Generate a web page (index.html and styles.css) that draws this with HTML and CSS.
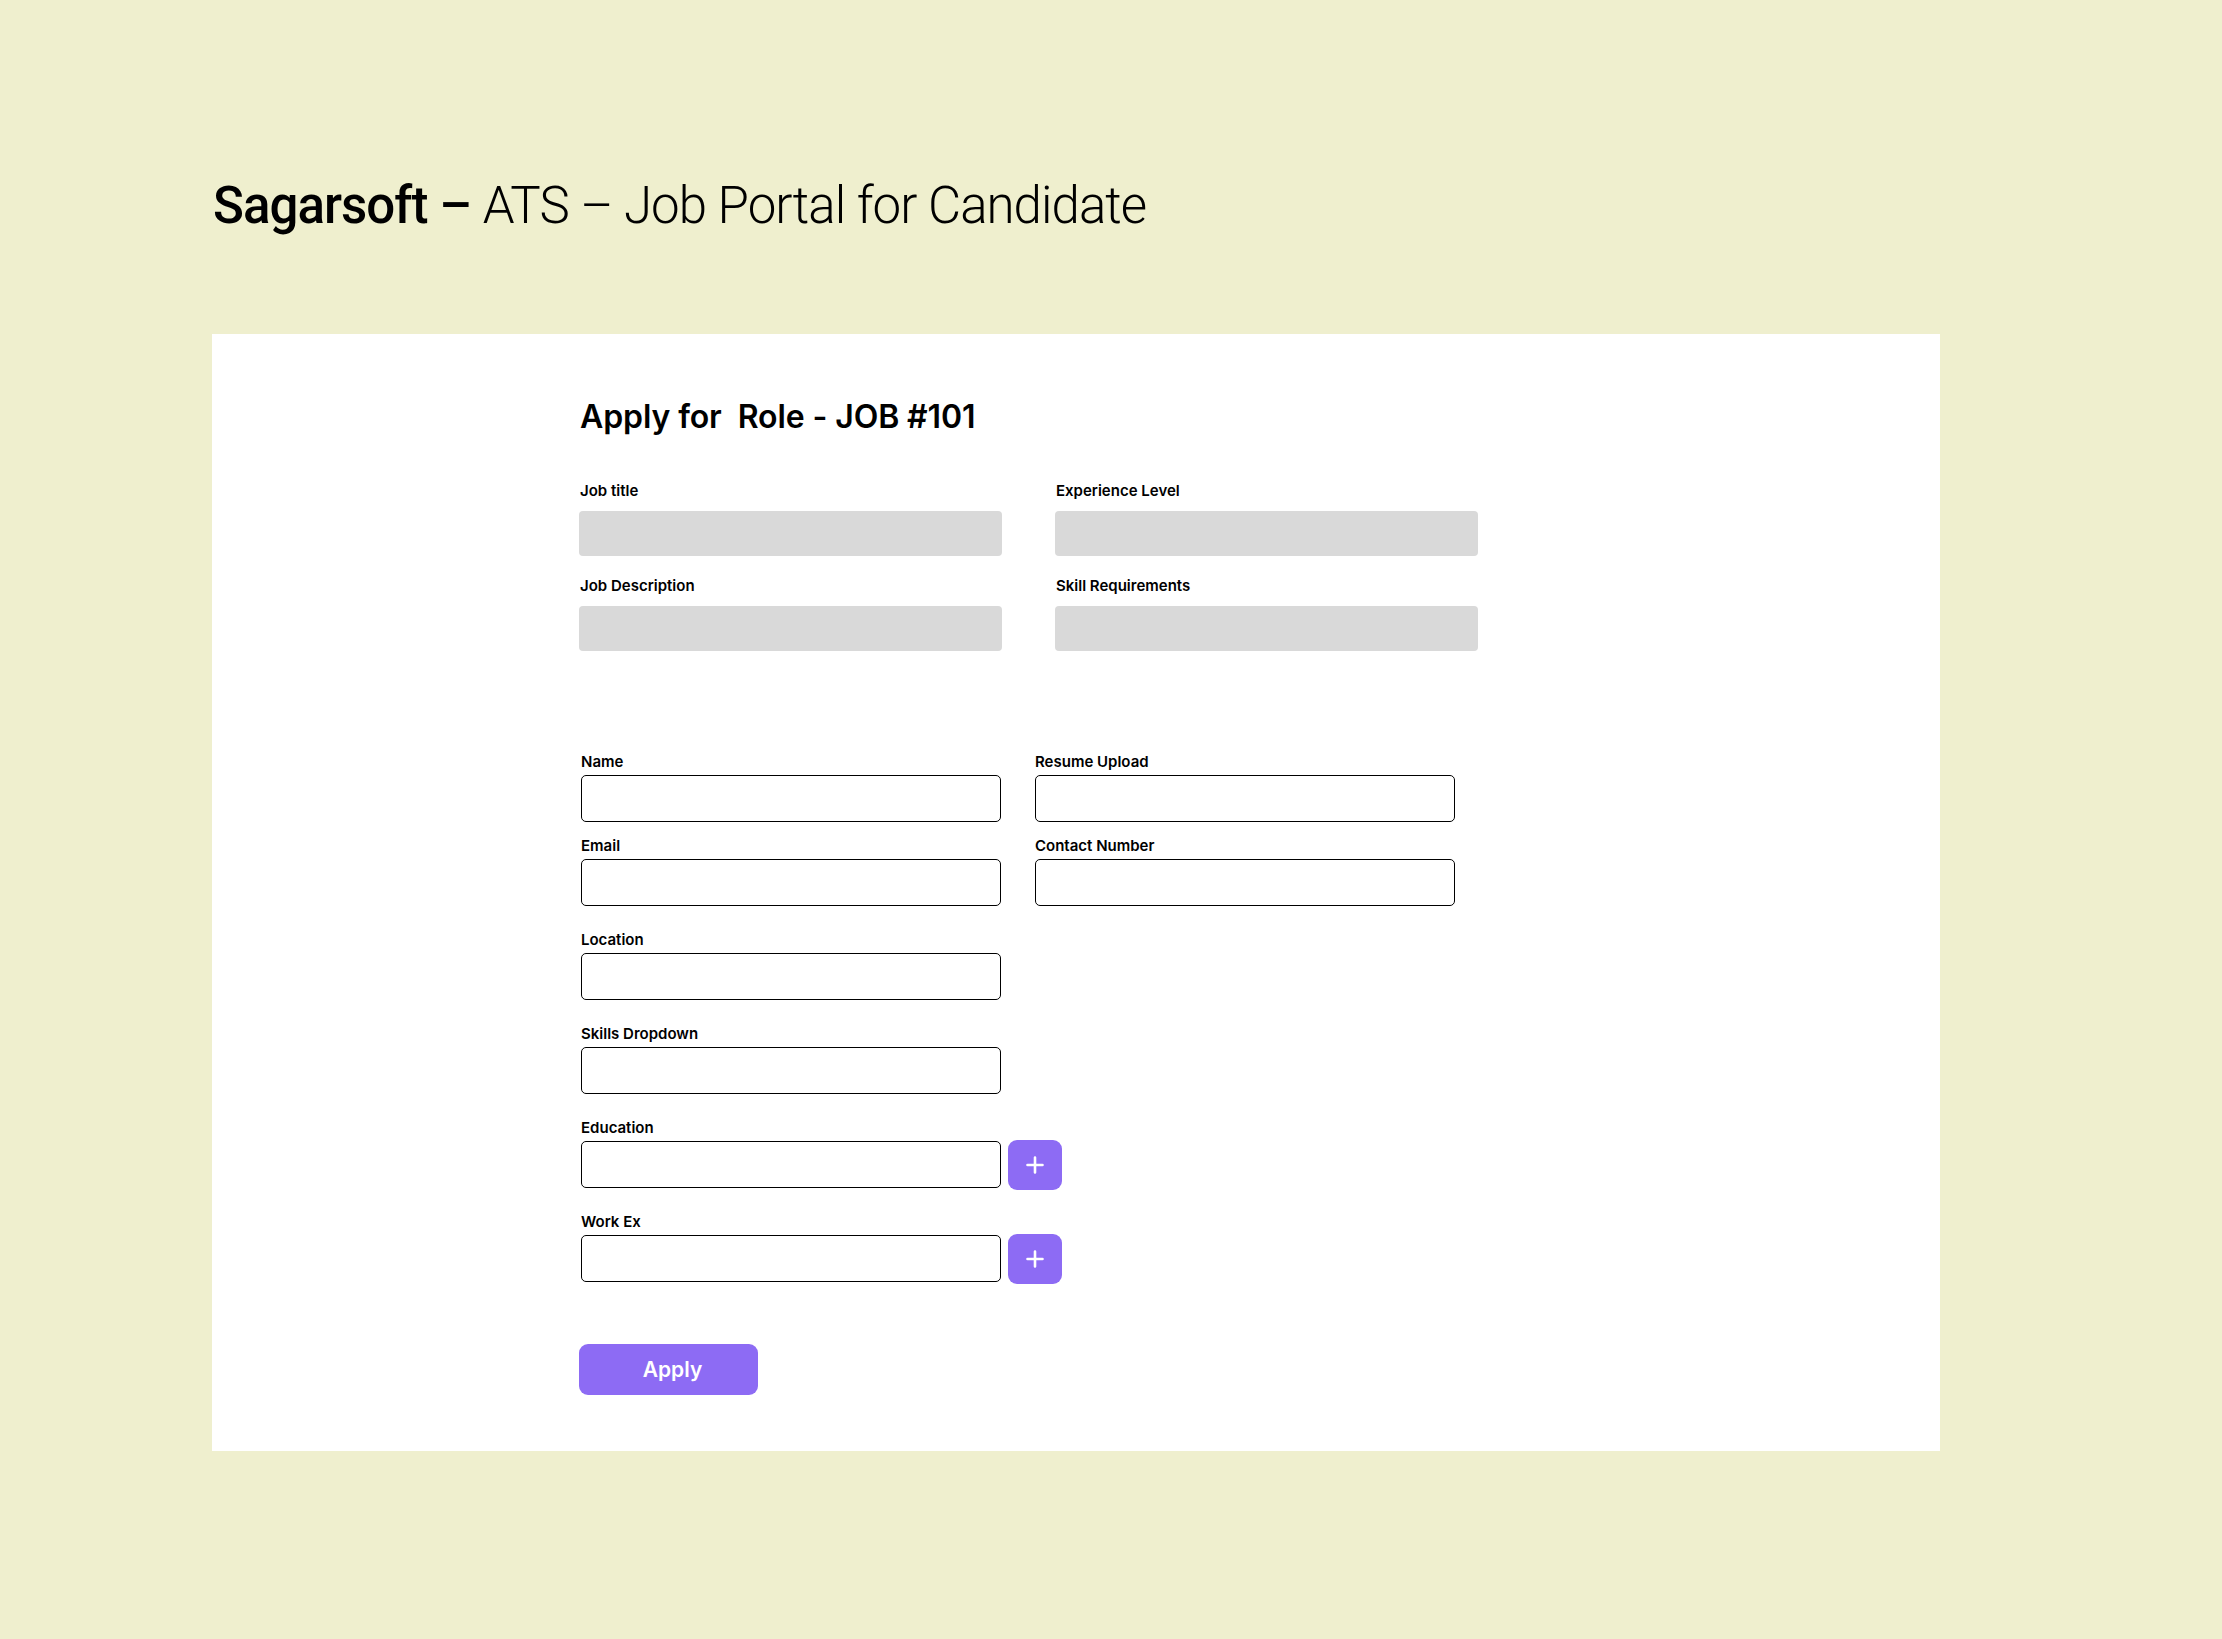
FILE: index.html
```html
<!DOCTYPE html>
<html lang="en">
<head>
<meta charset="utf-8">
<title>Sagarsoft – ATS – Job Portal for Candidate</title>
<link rel="stylesheet" href="styles.css">
</head>
<body>
<header class="page-header">
  <h1 class="page-title"><span class="brand">Sagarsoft –</span> <span class="subtitle">ATS – Job Portal for Candidate</span></h1>
</header>
<main class="card">
  <h2 class="form-heading">Apply for&nbsp; Role - JOB #101</h2>

  <section class="job-info">
    <div class="info-field">
      <div class="info-label">Job title</div>
      <div class="info-box"></div>
    </div>
    <div class="info-field">
      <div class="info-label">Experience Level</div>
      <div class="info-box"></div>
    </div>
    <div class="info-field">
      <div class="info-label">Job Description</div>
      <div class="info-box"></div>
    </div>
    <div class="info-field">
      <div class="info-label">Skill Requirements</div>
      <div class="info-box"></div>
    </div>
  </section>

  <form class="apply-form">
    <div class="pair-grid">
      <label class="field">
        <span class="field-label">Name</span>
        <input class="field-input" type="text">
      </label>
      <label class="field">
        <span class="field-label">Resume Upload</span>
        <input class="field-input" type="text">
      </label>
      <label class="field">
        <span class="field-label">Email</span>
        <input class="field-input" type="text">
      </label>
      <label class="field">
        <span class="field-label">Contact Number</span>
        <input class="field-input" type="text">
      </label>
    </div>

    <div class="single-list">
      <label class="field">
        <span class="field-label">Location</span>
        <input class="field-input" type="text">
      </label>
      <label class="field">
        <span class="field-label">Skills Dropdown</span>
        <input class="field-input" type="text">
      </label>
      <div class="field">
        <span class="field-label">Education</span>
        <div class="input-row">
          <input class="field-input" type="text">
          <button class="add-btn" type="button" aria-label="Add education">
            <svg viewBox="0 0 18 18" width="18" height="18"><path d="M9 1.5v15M1.5 9h15" stroke="#fff" stroke-width="2.6" stroke-linecap="round"/></svg>
          </button>
        </div>
      </div>
      <div class="field">
        <span class="field-label">Work Ex</span>
        <div class="input-row">
          <input class="field-input" type="text">
          <button class="add-btn" type="button" aria-label="Add work experience">
            <svg viewBox="0 0 18 18" width="18" height="18"><path d="M9 1.5v15M1.5 9h15" stroke="#fff" stroke-width="2.6" stroke-linecap="round"/></svg>
          </button>
        </div>
      </div>
    </div>

    <button class="apply-btn" type="button">Apply</button>
  </form>
</main>
</body>
</html>
```
FILE: styles.css
```css
* { box-sizing: border-box; }

html, body {
  margin: 0;
  padding: 0;
}

body {
  background: #efefce;
  font-family: Inter, "Noto Sans", sans-serif;
  color: #000;
  min-height: 1639px;
  padding-top: 175px;
}

.page-header {
  padding-left: 213px;
}

.page-title {
  margin: 0;
  font-family: Roboto, "Noto Sans", sans-serif;
  font-size: 51px;
  line-height: 62px;
  font-weight: 400;
  letter-spacing: -0.95px;
}

.brand {
  font-weight: 500;
}

.subtitle {
  font-weight: 300;
}

.card {
  margin: 97px 0 0 212px;
  width: 1728px;
  height: 1117px;
  background: #fff;
  padding: 63px 0 0 367px;
}

.form-heading {
  margin: 0;
  font-size: 32px;
  line-height: 39px;
  font-weight: 600;
  letter-spacing: -0.1px;
  padding-left: 1px;
}

.job-info {
  margin-top: 46px;
  display: grid;
  grid-template-columns: 423px 423px;
  column-gap: 53px;
  row-gap: 21px;
}

.info-label {
  font-size: 15px;
  line-height: 18px;
  font-weight: 600;
  margin-bottom: 11px;
  padding-left: 1px;
}

.info-box {
  height: 45px;
  background: #d9d9d9;
  border-radius: 4px;
}

.apply-form {
  margin-top: 102px;
  padding-left: 2px;
}

.pair-grid {
  display: grid;
  grid-template-columns: 420px 420px;
  column-gap: 34px;
  row-gap: 15px;
}

.single-list {
  margin-top: 25px;
  display: flex;
  flex-direction: column;
  gap: 25px;
  width: 482px;
}

.field {
  display: flex;
  flex-direction: column;
}

.field-label {
  font-size: 15px;
  line-height: 18px;
  font-weight: 600;
  margin-bottom: 4px;
}

.field-input {
  display: block;
  width: 420px;
  height: 47px;
  border: 1px solid #000;
  border-radius: 5px;
  background: #fff;
  font: inherit;
  padding: 0 12px;
  outline: none;
}

.input-row {
  display: flex;
  align-items: center;
  gap: 7px;
  height: 47px;
}

.add-btn {
  width: 54px;
  height: 50px;
  flex: none;
  border: none;
  border-radius: 9px;
  background: #8d6bf4;
  display: flex;
  align-items: center;
  justify-content: center;
  padding: 0;
  cursor: pointer;
}

.apply-btn {
  display: block;
  margin: 62px 0 0 -2px;
  width: 179px;
  height: 51px;
  border: none;
  border-radius: 9px;
  background: #8d6bf4;
  color: #fff;
  font-family: Inter, "Noto Sans", sans-serif;
  font-size: 21px;
  font-weight: 600;
  padding: 0 0 0 8px;
  cursor: pointer;
}
```
